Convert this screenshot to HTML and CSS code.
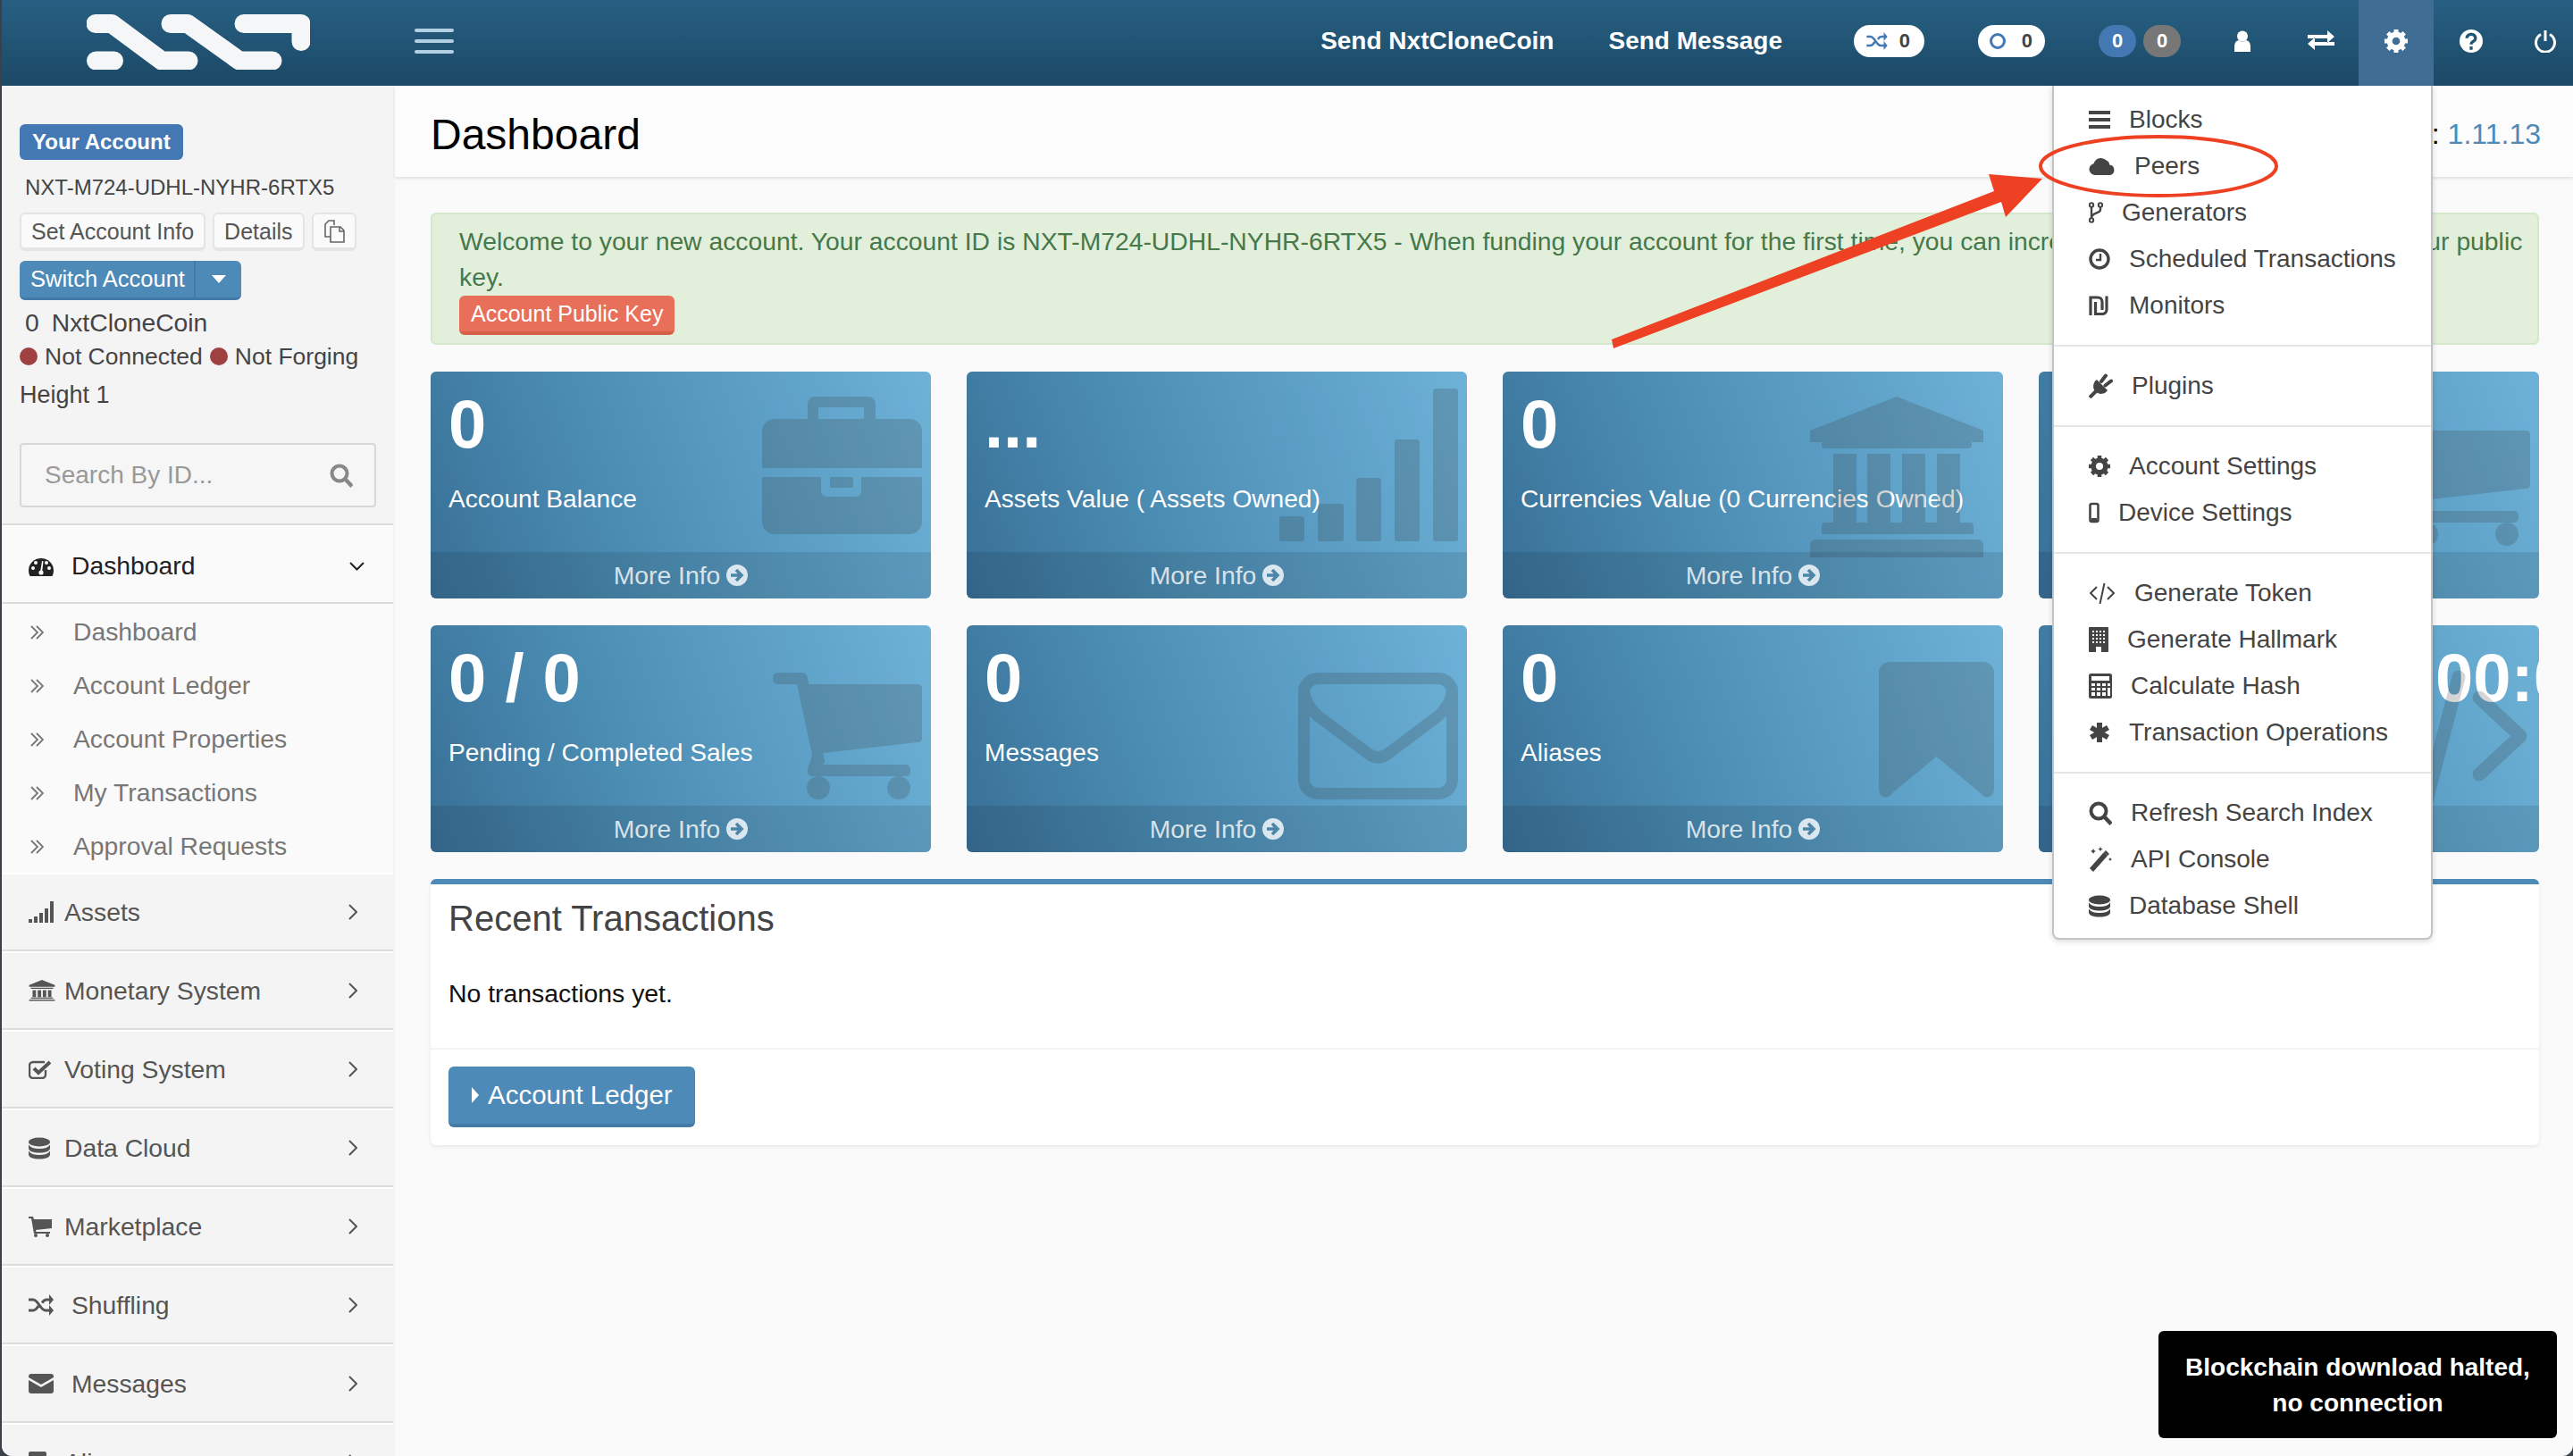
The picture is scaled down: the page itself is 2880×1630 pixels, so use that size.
FILE: index.html
```html
<!DOCTYPE html>
<html lang="en">
<head>
  <meta charset="UTF-8" />
  <title>Dashboard | NxtCloneCoin</title>
  <link rel="stylesheet" href="styles.css">
</head>
<body>

<svg class="sprite" width="0" height="0">
  <defs>
    <g id="i-bars"><rect x="0" y="2" width="24" height="4"/><rect x="0" y="10" width="24" height="4"/><rect x="0" y="18" width="24" height="4"/></g>
    <path id="i-cloud" d="M7 22a6.5 6.5 0 0 1-1.6-12.8A8.5 8.5 0 0 1 19.6 5.6a5.6 5.6 0 0 1 3.6 5A5.8 5.8 0 0 1 24 22z"/>
    <g id="i-fork" fill="none" stroke="currentColor" stroke-width="2"><circle cx="3" cy="3.5" r="2.2"/><circle cx="3" cy="20.5" r="2.2"/><circle cx="13" cy="3.5" r="2.2"/><path d="M3 6v12M13 6v3c0 4-10 3-10 9" stroke-width="2.4"/></g>
    <g id="i-clock" fill="none" stroke="currentColor"><circle cx="12" cy="12" r="10" stroke-width="3.4"/><path d="M13 6v7H8" stroke-width="2.4"/></g>
    <g id="i-ils" fill="none" stroke="currentColor" stroke-width="3.2"><path d="M2 23V3h8a5 5 0 0 1 5 5v9"/><path d="M20 1.500v15a5 5 0 0 1-5 5H7.500V8"/></g>
    <g id="i-plug"><path d="M9 7l12 12a9 9 0 0 1-13.500 1.500A9 9 0 0 1 9 7z"/><path d="M8 20l-7 7" stroke="currentColor" stroke-width="4" fill="none"/><path d="M14 9l5-6.500M18.500 13.500l6.500-5" stroke="currentColor" stroke-width="4" fill="none" stroke-linecap="round"/></g>
    <g id="i-cog" fill="none" stroke="currentColor"><circle cx="12" cy="12" r="6.800" stroke-width="5.600"/><path d="M12 0v5M12 19v5M0 12h5M19 12h5M3.500 3.500l3.500 3.500M20.500 3.500L17 7M3.500 20.500L7 17M20.500 20.500L17 17" stroke-width="4.600"/></g>
    <g id="i-mobile" fill="none" stroke="currentColor"><rect x="1.500" y="2" width="9" height="20" rx="2" stroke-width="2.600"/><path d="M3 19.500h6" stroke-width="3"/></g>
    <path id="i-code" d="M9 5L2 12l7 7M21 5l7 7-7 7M17.500 1l-5 23" fill="none" stroke="currentColor" stroke-width="2"/>
    <g id="i-building"><rect width="22" height="28" rx="1"/><path d="M4 4h2v2H4zM8 4h2v2H8zM12 4h2v2h-2zM16 4h2v2h-2zM4 8h2v2H4zM8 8h2v2H8zM12 8h2v2h-2zM16 8h2v2h-2zM4 12h2v2H4zM8 12h2v2H8zM12 12h2v2h-2zM16 12h2v2h-2zM4 16h2v2H4zM8 16h2v2H8zM12 16h2v2h-2zM16 16h2v2h-2zM8 22h6v6H8z" fill="#fff"/></g>
    <g id="i-calc"><rect width="26" height="28" rx="2.500"/><path d="M3 3h20v5H3zM3 11h4v3H3zM9 11h4v3H9zM15 11h4v3h-4zM21 11h3v3h-3zM3 16h4v3H3zM9 16h4v3H9zM15 16h4v3h-4zM21 16h3v9h-3zM3 21h4v4H3zM9 21h4v4H9zM15 21h4v4h-4z" fill="#fff"/></g>
    <path id="i-asterisk" d="M12 1v22M2.500 6.500l19 11M21.500 6.500l-19 11" stroke="currentColor" stroke-width="6" fill="none"/>
    <g id="i-search" fill="none" stroke="currentColor"><circle cx="11" cy="11" r="8.500" stroke-width="4"/><path d="M17 17l8 8.500" stroke-width="4.400"/></g>
    <g id="i-magic"><path d="M1 25l16-18 4 4L5 29z"/><path d="M5 3l1 2 2 1-2 1-1 2-1-2-2-1 2-1zM13 1l.8 1.800 1.800.8-1.800.8-.8 1.800-.8-1.800-1.800-.8 1.800-.8zM24 13l.7 1.300 1.300.7-1.300.7-.7 1.300-.7-1.300-1.300-.7 1.300-.7z"/><path d="M17 7l2-2 4 4-2 2z"/></g>
    <g id="i-db"><ellipse cx="12" cy="5" rx="12" ry="5"/><path d="M0 8v4c0 3 5 5 12 5s12-2 12-5V8c-2 3-6 4.500-12 4.500S2 11 0 8zM0 15v4c0 3 5 5 12 5s12-2 12-5v-4c-2 3-6 4.500-12 4.500S2 18 0 15z"/></g>
    <path id="i-gauge" d="M0 16a14 14 0 0 1 28 0q0 3-1.500 6h-25Q0 19 0 16z"/>
    <g id="i-signal"><rect x="0" y="20" width="4" height="4"/><rect x="6" y="17" width="4" height="7"/><rect x="12" y="13" width="4" height="11"/><rect x="18" y="8" width="4" height="16"/><rect x="24" y="0" width="4" height="24"/></g>
    <g id="i-bank"><path d="M15 0l15 6v2H0V6z"/><path d="M2 9h26v1.500H2zM4 12h4v8H4zM10 12h4v8h-4zM16 12h4v8h-4zM22 12h4v8h-4zM2 20.500h26V22H2zM0 23h30v1.500H0z"/></g>
    <g id="i-check" fill="none" stroke="currentColor"><path d="M19 12v5a4 4 0 0 1-4 4H5a4 4 0 0 1-4-4V7a4 4 0 0 1 4-4h13" stroke-width="2.400"/><path d="M6 10l5 5L24 3" stroke-width="4"/></g>
    <g id="i-cart"><path d="M0 0h5l1 3h20v10L8 15l.500 2H24v2H6L3 2H0z"/><circle cx="8" cy="21" r="2"/><circle cx="21" cy="21" r="2"/></g>
    <g id="i-random"><path d="M0 6h5c6 0 8 12 14 12h5M0 18h5c3 0 4.500-2.500 6-5M15 9.500C16.500 7.500 18 6 20 6h4" fill="none" stroke="currentColor" stroke-width="3"/><path d="M23 0l5 6-5 6zM23 12l5 6-5 6z"/></g>
    <g id="i-mail"><path d="M3 0h22a3 3 0 0 1 3 3v1L14 12 0 4V3a3 3 0 0 1 3-3z"/><path d="M0 7v12a3 3 0 0 0 3 3h22a3 3 0 0 0 3-3V7L14 15z"/></g>
    <path id="i-bookmark" d="M2 0h16a2 2 0 0 1 2 2v22l-10-7-10 7V2a2 2 0 0 1 2-2z"/>
    <path id="i-right" d="M1 1l8 8-8 8" fill="none" stroke="currentColor" stroke-width="2"/>
    <path id="i-down" d="M1 1l7.500 7.500L16 1" fill="none" stroke="currentColor" stroke-width="2"/>
    <path id="i-double" d="M1 1l7 7-7 7M7 1l7 7-7 7" fill="none" stroke="currentColor" stroke-width="1.800"/>
    <g id="i-more"><circle cx="12" cy="12" r="12" fill="currentColor"/><path d="M5 12h11M11 6l6 6-6 6" fill="none" stroke="#4c85a9" stroke-width="3.600"/></g>
    <g id="g-cart"><path d="M6 0h26q6 0 7 6l1 7h122q5 0 5 5v55q0 5-5 5L56 90l2 8q1 2-2 5h93q5 0 5 7 0 6-5 6H45q-6 0-6-6 0-4 3-10l2-8L27 13H6q-6 0-6-6.500T6 0z"/><circle cx="51" cy="129" r="13"/><circle cx="141" cy="129" r="13"/></g>
  </defs>
</svg>

<div class="window">

  <header class="topbar">
    <div class="logo-wrap">
      <svg class="logo" width="250" height="62" viewBox="97 16 250 62">
        <path d="M107 26.500h18l56 41.500h30M191 26.500h19l58 41.500h37M273 26.500h64v20M107.500 68h20" fill="none" stroke="#f4f6f8" stroke-width="21" stroke-linecap="round" stroke-linejoin="round"/>
      </svg>
    </div>
    <div class="burger"><span></span><span></span><span></span></div>

    <nav class="topnav">
      <a class="toplink" href="#">Send NxtCloneCoin</a>
      <a class="toplink toplink-msg" href="#">Send Message</a>
      <span class="pill pill-a"><svg width="24" height="20" viewBox="0 0 28 24"><use href="#i-random"/></svg>0</span>
      <span class="pill pill-b"><svg width="20" height="20" viewBox="0 0 20 20"><circle cx="10" cy="10" r="7.500" fill="none" stroke="currentColor" stroke-width="3"/></svg>0</span>
      <span class="count count-blue">0</span>
      <span class="count count-grey">0</span>
      <a class="cell cell-first" href="#"><svg width="24" height="24" viewBox="0 0 24 24"><circle cx="12" cy="6.500" r="6"/><path d="M3 24v-6q0-6 5-7 4 3 8 0 5 1 5 7v6z"/></svg></a>
      <a class="cell" href="#"><svg width="30" height="24" viewBox="0 0 30 24"><path d="M0 6h22V1l8 7-8 7v-5H0zM30 14H8V9l-8 7 8 7v-5h22z" transform="translate(0 -1)"/></svg></a>
      <div class="cell cell-open">
        <svg width="26" height="26" viewBox="0 0 24 24"><use href="#i-cog"/></svg>
        <div class="dropdown">
          <a class="menu-item" href="#"><svg width="24" height="24" viewBox="0 0 24 24"><use href="#i-bars"/></svg>Blocks</a>
          <a class="menu-item" href="#"><svg width="30" height="24" viewBox="0 0 30 24"><use href="#i-cloud"/></svg>Peers</a>
          <a class="menu-item" href="#"><svg width="16" height="24" viewBox="0 0 16 24"><use href="#i-fork"/></svg>Generators</a>
          <a class="menu-item" href="#"><svg width="24" height="24" viewBox="0 0 24 24"><use href="#i-clock"/></svg>Scheduled Transactions</a>
          <a class="menu-item" href="#"><svg width="22" height="24" viewBox="0 0 22 24"><use href="#i-ils"/></svg><span class="shift-2">Monitors</span></a>
          <div class="menu-line"></div>
          <a class="menu-item" href="#"><svg width="27" height="28" viewBox="0 0 27 28"><use href="#i-plug"/></svg>Plugins</a>
          <div class="menu-line"></div>
          <a class="menu-item" href="#"><svg width="24" height="24" viewBox="0 0 24 24"><use href="#i-cog"/></svg>Account Settings</a>
          <a class="menu-item" href="#"><svg width="12" height="24" viewBox="0 0 12 24"><use href="#i-mobile"/></svg>Device Settings</a>
          <div class="menu-line"></div>
          <a class="menu-item" href="#"><svg width="30" height="24" viewBox="0 0 30 24"><use href="#i-code"/></svg>Generate Token</a>
          <a class="menu-item" href="#"><svg width="22" height="28" viewBox="0 0 22 28"><use href="#i-building"/></svg>Generate Hallmark</a>
          <a class="menu-item" href="#"><svg width="26" height="28" viewBox="0 0 26 28"><use href="#i-calc"/></svg>Calculate Hash</a>
          <a class="menu-item" href="#"><svg width="24" height="24" viewBox="0 0 24 24"><use href="#i-asterisk"/></svg>Transaction Operations</a>
          <div class="menu-line"></div>
          <a class="menu-item" href="#"><svg width="26" height="27" viewBox="0 0 26 27"><use href="#i-search"/></svg>Refresh Search Index</a>
          <a class="menu-item" href="#"><svg width="26" height="30" viewBox="0 0 26 30"><use href="#i-magic"/></svg>API Console</a>
          <a class="menu-item" href="#"><svg width="24" height="27" viewBox="0 0 24 24"><use href="#i-db"/></svg>Database Shell</a>
        </div>
      </div>
      <a class="cell" href="#"><svg width="26" height="26" viewBox="0 0 24 24"><circle cx="12" cy="12" r="12"/><path d="M7.500 9a4.500 4 0 1 1 6.500 3.500c-1.500.8-2 1.500-2 3M12 17.500v3.500" fill="none" stroke="#205470" stroke-width="3"/></svg></a>
      <a class="cell cell-last" href="#"><svg width="24" height="26" viewBox="0 0 24 26"><path d="M7 5.500a10.500 10.500 0 1 0 10 0M12 1v12" fill="none" stroke="currentColor" stroke-width="3"/></svg></a>
    </nav>
  </header>

  <div class="layout">
    <aside class="sidebar">
      <div class="user-box">
        <span class="account-badge">Your Account</span>
        <div class="account-id">NXT-M724-UDHL-NYHR-6RTX5</div>
        <div class="btn-row">
          <a class="btn-plain" href="#">Set Account Info</a>
          <a class="btn-plain" href="#">Details</a>
          <a class="btn-plain btn-copy" href="#"><svg width="24" height="26" viewBox="0 0 24 26"><path d="M8 19H2V5l4-4h6v5M8 8h6l5 0 4 4v13H8zM18 8v5h5" fill="none" stroke="#666" stroke-width="1.600"/></svg></a>
        </div>
        <div class="switch">
          <a class="switch-main" href="#">Switch Account</a>
          <a class="switch-caret" href="#"><i></i></a>
        </div>
        <div class="balance"><span>0</span>NxtCloneCoin</div>
        <div class="status"><i class="dot"></i>Not Connected<i class="dot dot-second"></i>Not Forging</div>
        <div class="height">Height 1</div>
        <div class="search">
          <span>Search By ID...</span>
          <svg width="26" height="27" viewBox="0 0 26 27"><use href="#i-search"/></svg>
        </div>
      </div>

      <nav class="side-nav">
        <a class="side-row side-row-open" href="#">
          <span class="side-ico side-ico-wide"><svg width="28" height="22" viewBox="0 0 28 22"><use href="#i-gauge"/><g fill="#fafafa"><circle cx="5" cy="13" r="2"/><circle cx="8" cy="7" r="2"/><circle cx="20" cy="7" r="2"/><circle cx="23" cy="13" r="2"/><circle cx="14" cy="18" r="2.600"/><path d="M13 18l2-13 1.500.5L15 18z"/></g></svg></span>
          Dashboard
          <svg class="chev chev-down" width="17" height="10" viewBox="0 0 17 10"><use href="#i-down"/></svg>
        </a>
        <div class="side-sub">
          <a class="sub-row" href="#"><svg width="15" height="16" viewBox="0 0 15 16"><use href="#i-double"/></svg>Dashboard</a>
          <a class="sub-row" href="#"><svg width="15" height="16" viewBox="0 0 15 16"><use href="#i-double"/></svg>Account Ledger</a>
          <a class="sub-row" href="#"><svg width="15" height="16" viewBox="0 0 15 16"><use href="#i-double"/></svg>Account Properties</a>
          <a class="sub-row" href="#"><svg width="15" height="16" viewBox="0 0 15 16"><use href="#i-double"/></svg>My Transactions</a>
          <a class="sub-row" href="#"><svg width="15" height="16" viewBox="0 0 15 16"><use href="#i-double"/></svg>Approval Requests</a>
        </div>
        <a class="side-row" href="#"><span class="side-ico"><svg width="28" height="24" viewBox="0 0 28 24"><use href="#i-signal"/></svg></span>Assets<svg class="chev" width="10" height="18" viewBox="0 0 10 18"><use href="#i-right"/></svg></a>
        <a class="side-row" href="#"><span class="side-ico"><svg width="30" height="24" viewBox="0 0 30 25"><use href="#i-bank"/></svg></span>Monetary System<svg class="chev" width="10" height="18" viewBox="0 0 10 18"><use href="#i-right"/></svg></a>
        <a class="side-row" href="#"><span class="side-ico"><svg width="26" height="22" viewBox="0 0 26 22"><use href="#i-check"/></svg></span>Voting System<svg class="chev" width="10" height="18" viewBox="0 0 10 18"><use href="#i-right"/></svg></a>
        <a class="side-row" href="#"><span class="side-ico"><svg width="24" height="27" viewBox="0 0 24 24"><use href="#i-db"/></svg></span>Data Cloud<svg class="chev" width="10" height="18" viewBox="0 0 10 18"><use href="#i-right"/></svg></a>
        <a class="side-row" href="#"><span class="side-ico"><svg width="26" height="23" viewBox="0 0 26 23"><use href="#i-cart"/></svg></span>Marketplace<svg class="chev" width="10" height="18" viewBox="0 0 10 18"><use href="#i-right"/></svg></a>
        <a class="side-row" href="#"><span class="side-ico side-ico-wide"><svg width="28" height="24" viewBox="0 0 28 24"><use href="#i-random"/></svg></span>Shuffling<svg class="chev" width="10" height="18" viewBox="0 0 10 18"><use href="#i-right"/></svg></a>
        <a class="side-row" href="#"><span class="side-ico side-ico-wide"><svg width="28" height="22" viewBox="0 0 28 22"><use href="#i-mail"/></svg></span>Messages<svg class="chev" width="10" height="18" viewBox="0 0 10 18"><use href="#i-right"/></svg></a>
        <a class="side-row" href="#"><span class="side-ico"><svg width="20" height="24" viewBox="0 0 20 24"><use href="#i-bookmark"/></svg></span>Aliases<svg class="chev" width="10" height="18" viewBox="0 0 10 18"><use href="#i-right"/></svg></a>
      </nav>
    </aside>

    <main class="main">
      <div class="title-bar">
        <h1>Dashboard</h1>
        <div class="version">Version: <a href="#">1.11.13</a></div>
      </div>

      <div class="content">
        <div class="alert">
          <div>Welcome to your new account. Your account ID is NXT-M724-UDHL-NYHR-6RTX5 - When funding your account for the first time, you can increase the security by specifying your public key.</div>
          <a class="btn-red" href="#">Account Public Key</a>
        </div>

        <div class="cards">
          <div class="card">
            <div class="card-body">
              <div class="card-num">0</div>
              <div class="card-label">Account Balance</div>
            </div>
            <a class="card-more" href="#">More Info<svg width="24" height="24" viewBox="0 0 24 24"><use href="#i-more"/></svg></a>
            <svg class="ghost ghost-brief" width="179" height="154" viewBox="0 0 179 154"><path fill-rule="evenodd" d="M14 25h37V8a8 8 0 0 1 8-8h60a8 8 0 0 1 8 8v17h38a14 14 0 0 1 14 14v41H0V39a14 14 0 0 1 14-14zM63 12v13h51V12zM0 90h66v16a6 6 0 0 0 6 6h33a6 6 0 0 0 6-6V90h68v50a14 14 0 0 1-14 14H14a14 14 0 0 1-14-14zM76 90h26v12H76z"/></svg>
          </div>

          <div class="card">
            <div class="card-body">
              <div class="card-num">...</div>
              <div class="card-label">Assets Value ( Assets Owned)</div>
            </div>
            <a class="card-more" href="#">More Info<svg width="24" height="24" viewBox="0 0 24 24"><use href="#i-more"/></svg></a>
            <svg class="ghost ghost-bars" width="200" height="171" viewBox="0 0 200 171"><rect x="0" y="143" width="28" height="28" rx="3"/><rect x="43" y="129" width="29" height="42" rx="3"/><rect x="86" y="100" width="28" height="71" rx="3"/><rect x="129" y="57" width="28" height="114" rx="3"/><rect x="172" y="0" width="28" height="171" rx="3"/></svg>
          </div>

          <div class="card">
            <div class="card-body">
              <div class="card-num">0</div>
              <div class="card-label">Currencies Value (0 Currencies Owned)</div>
            </div>
            <a class="card-more" href="#">More Info<svg width="24" height="24" viewBox="0 0 24 24"><use href="#i-more"/></svg></a>
            <svg class="ghost ghost-bank" width="194" height="180" viewBox="0 0 194 180"><path d="M97 0l97 38v13H181v3a4 4 0 0 1-4 4H17a4 4 0 0 1-4-4v-3H0V38zM26 64h26v77H26zM64 64h26v77H64zM103 64h26v77h-26zM142 64h26v77h-26zM17 141h162a4 4 0 0 1 4 4v9H13v-9a4 4 0 0 1 4-4zM6 160h182a6 6 0 0 1 6 6v14H0v-14a6 6 0 0 1 6-6z"/></svg>
          </div>

          <div class="card">
            <div class="card-body"></div>
            <a class="card-more" href="#">More Info<svg width="24" height="24" viewBox="0 0 24 24"><use href="#i-more"/></svg></a>
            <svg class="ghost ghost-cart" width="167" height="142" viewBox="0 0 167 142"><use href="#g-cart"/></svg>
          </div>

          <div class="card">
            <div class="card-body">
              <div class="card-num">0 / 0</div>
              <div class="card-label">Pending / Completed Sales</div>
            </div>
            <a class="card-more" href="#">More Info<svg width="24" height="24" viewBox="0 0 24 24"><use href="#i-more"/></svg></a>
            <svg class="ghost ghost-cart" width="167" height="142" viewBox="0 0 167 142"><use href="#g-cart"/></svg>
          </div>

          <div class="card">
            <div class="card-body">
              <div class="card-num">0</div>
              <div class="card-label">Messages</div>
            </div>
            <a class="card-more" href="#">More Info<svg width="24" height="24" viewBox="0 0 24 24"><use href="#i-more"/></svg></a>
            <svg class="ghost ghost-mail" width="179" height="142" viewBox="0 0 179 142"><path d="M22 6.500h135a15.500 15.500 0 0 1 15.500 15.500v98a15.500 15.500 0 0 1-15.500 15.500H22A15.500 15.500 0 0 1 6.500 120V22A15.500 15.500 0 0 1 22 6.500zM6.500 16c0 14 5 22 15 32l56 42q12 10 24 0l56-42c10-10 15-18 15-32" fill="none" stroke="#333" stroke-width="13"/></svg>
          </div>

          <div class="card">
            <div class="card-body">
              <div class="card-num">0</div>
              <div class="card-label">Aliases</div>
            </div>
            <a class="card-more" href="#">More Info<svg width="24" height="24" viewBox="0 0 24 24"><use href="#i-more"/></svg></a>
            <svg class="ghost ghost-mark" width="129" height="152" viewBox="0 0 129 152"><path d="M12 0h105a12 12 0 0 1 12 12v130c0 10-10 13-15 5L64.500 106 15 147c-5 8-15 5-15-5V12A12 12 0 0 1 12 0z"/></svg>
          </div>

          <div class="card">
            <div class="card-body">
              <div class="card-num card-num-clip">00:00:00</div>
            </div>
            <a class="card-more" href="#">More Info<svg width="24" height="24" viewBox="0 0 24 24"><use href="#i-more"/></svg></a>
            <svg class="ghost ghost-code" width="220" height="155" viewBox="0 0 220 155"><path d="M57 31L11 74l46 43M163 31l46 43-46 43M140 8l-37 142" fill="none" stroke="#333" stroke-width="15" stroke-linejoin="round" stroke-linecap="round"/></svg>
          </div>
        </div>

        <section class="panel">
          <h3>Recent Transactions</h3>
          <p>No transactions yet.</p>
          <div class="panel-foot">
            <a class="btn-blue" href="#"><i></i>Account Ledger</a>
          </div>
        </section>
      </div>
    </main>
  </div>

  <!-- red markup drawn over the screenshot -->
  <svg class="markup" width="2880" height="1630" viewBox="0 0 2880 1630">
    <ellipse cx="2416" cy="186" rx="132" ry="33" fill="none" stroke="#ee4023" stroke-width="4"/>
    <path d="M1804 380L2232 214L2226 195L2286 200L2245 243L2240 226L1806 390Z" fill="#ee4023"/>
  </svg>

  <div class="toast">Blockchain download halted,<br>no connection</div>
</div>

</body>
</html>
```

FILE: styles.css
```css
* {
  box-sizing: border-box;
}

html, body {
  margin: 0;
  height: 100%;
  overflow: hidden;
  background: #3c4048;
}

body {
  font-family: 'Liberation Sans', Arial, sans-serif;
  font-size: 28px;
  color: #444;
}

a {
  color: inherit;
  text-decoration: none;
}

svg {
  fill: currentColor;
  flex: none;
}

.sprite {
  position: absolute;
}

.window {
  position: relative;
  margin-left: 2px;
  height: 1630px;
  overflow: hidden;
  background: #fafafa;
  border-radius: 0 0 12px 12px;
  display: flex;
  flex-direction: column;
}

/* top bar */
.topbar {
  position: relative;
  z-index: 10;
  height: 96px;
  flex: none;
  display: flex;
  align-items: center;
  background: linear-gradient(#275f82, #1c4966);
  color: #fff;
}

.logo-wrap {
  width: 440px;
  padding: 0 0 2px 95px;
  display: flex;
}

.burger {
  margin: 0 0 4px 22px;
  width: 44px;
}

.burger span {
  display: block;
  height: 4px;
  margin-bottom: 8px;
  border-radius: 2px;
  background: #b3cfe4;
}

.burger span:last-child {
  margin-bottom: 0;
}

.topnav {
  margin-left: auto;
  height: 96px;
  display: flex;
  align-items: center;
}

.toplink {
  margin-bottom: 4px;
  font-weight: bold;
  font-size: 28px;
}

.toplink-msg {
  margin-left: 61px;
}

.pill {
  height: 36px;
  margin-bottom: 4px;
  border-radius: 18px;
  background: #fff;
  color: #444;
  font-size: 22px;
  font-weight: bold;
  display: flex;
  align-items: center;
  justify-content: space-between;
}

.pill svg {
  color: #4478b3;
}

.pill-a {
  width: 79px;
  margin-left: 80px;
  padding: 0 16px 0 14px;
}

.pill-b {
  width: 75px;
  margin-left: 60px;
  padding: 0 14px 0 12px;
}

.count {
  width: 42px;
  height: 36px;
  margin-bottom: 4px;
  border-radius: 18px;
  font-size: 22px;
  font-weight: bold;
  display: flex;
  align-items: center;
  justify-content: center;
}

.count-blue {
  margin-left: 60px;
  background: #4478b3;
}

.count-grey {
  margin-left: 8px;
  background: #777;
}

.cell {
  position: relative;
  width: 84px;
  height: 96px;
  padding-bottom: 4px;
  display: flex;
  align-items: center;
  justify-content: center;
}

.cell-first {
  margin-left: 31px;
  padding-right: 8px;
}

.cell-open {
  background: #3f6d93;
}

.cell-last {
  width: 72px;
  justify-content: flex-start;
  padding-left: 29px;
}

/* settings menu */
.dropdown {
  position: absolute;
  top: 100%;
  right: 1px;
  width: 426px;
  padding: 12px 0 10px;
  background: #fff;
  color: #444;
  font-size: 28px;
  border: solid #c4c4c4;
  border-width: 0 2px 2px;
  border-radius: 0 0 8px 8px;
  box-shadow: 0 2px 6px rgba(0, 0, 0, 0.15);
}

.menu-item {
  height: 52px;
  padding-left: 39px;
  display: flex;
  align-items: center;
  gap: 21px;
  white-space: nowrap;
}

.shift-2 {
  margin-left: 2px;
}

.menu-line {
  height: 2px;
  margin: 18px 0;
  background: #e6e6e6;
}

/* sidebar */
.layout {
  flex: 1;
  display: flex;
  min-height: 0;
}

.sidebar {
  width: 440px;
  flex: none;
  background: #f4f4f4;
  padding-right: 2px;
}

.user-box {
  height: 492px;
  padding: 43px 19px 0 20px;
  border-bottom: 2px solid #dcdcdc;
}

.account-badge {
  display: inline-block;
  height: 40px;
  line-height: 40px;
  padding: 0 14px;
  background: #4478b3;
  color: #fff;
  font-size: 24px;
  font-weight: bold;
  border-radius: 6px;
}

.account-id {
  margin: 16px 0 0 6px;
  height: 30px;
  line-height: 30px;
  font-size: 24px;
}

.btn-row {
  margin-top: 13px;
  display: flex;
  gap: 8px;
}

.btn-plain {
  height: 43px;
  line-height: 39px;
  padding: 0 11px;
  font-size: 25px;
  color: #555;
  background: #fafafa;
  border: 2px solid #e4e4e4;
  border-bottom-width: 4px;
  border-radius: 6px;
}

.btn-copy {
  display: flex;
  align-items: center;
}

.switch {
  margin-top: 11px;
  width: 248px;
  height: 44px;
  display: flex;
  color: #fff;
  background: #4e8ab8;
  border-bottom: 3px solid #427ba7;
  border-radius: 6px;
  font-size: 25.500px;
  line-height: 41px;
}

.switch-main {
  width: 197px;
  padding-left: 12px;
  white-space: nowrap;
  border-right: 2px solid #427ba7;
}

.switch-caret {
  flex: 1;
  display: flex;
  align-items: center;
  justify-content: center;
}

.switch-caret i {
  border-top: 9px solid #fff;
  border-left: 8px solid transparent;
  border-right: 8px solid transparent;
}

.balance {
  margin: 7px 0 0 6px;
  height: 36px;
  line-height: 36px;
  font-size: 28.300px;
}

.balance span {
  margin-right: 14px;
}

.status {
  margin-top: 4px;
  height: 32px;
  display: flex;
  align-items: center;
  font-size: 26.500px;
  white-space: nowrap;
}

.dot {
  width: 20px;
  height: 20px;
  margin-right: 8px;
  border-radius: 50%;
  background: #a04141;
}

.dot-second {
  margin-left: 8px;
}

.height {
  margin-top: 11px;
  height: 32px;
  line-height: 32px;
  font-size: 27px;
}

.search {
  margin-top: 38px;
  height: 72px;
  padding: 0 24px 0 26px;
  display: flex;
  align-items: center;
  justify-content: space-between;
  color: #999;
  background: #f6f6f6;
  border: 2px solid #d8d8d8;
  border-radius: 4px;
}

.search svg {
  color: #888;
}

.side-nav {
  font-size: 28.300px;
}

.side-row {
  position: relative;
  height: 88px;
  padding-left: 30px;
  display: flex;
  align-items: center;
  color: #555;
  border-top: 2px solid #fff;
  border-bottom: 2px solid #dcdcdc;
}

.side-row-open {
  padding-top: 3px;
  background: #fafafa;
  color: #222;
}

.side-ico {
  width: 40px;
  display: flex;
}

.side-ico-wide {
  width: 48px;
}

.chev {
  position: absolute;
  right: 40px;
}

.chev-down {
  right: 32px;
}

.side-sub {
  height: 301px;
  background: #fafafa;
  color: #777;
}

.sub-row {
  height: 60px;
  padding: 3px 0 0 32px;
  display: flex;
  align-items: center;
  gap: 33px;
}

/* main column */
.main {
  flex: 1;
  min-width: 0;
}

.title-bar {
  height: 102px;
  padding: 6px 36px 0 40px;
  display: flex;
  align-items: center;
  justify-content: space-between;
  background: #fcfcfc;
  box-shadow: 0 2px 3px rgba(0, 0, 0, 0.1);
}

.title-bar h1 {
  margin: 0;
  font-size: 48px;
  font-weight: normal;
  color: #000;
}

.version {
  font-size: 32px;
  color: #000;
}

.version a {
  color: #4e8ab8;
}

.content {
  padding: 40px 38px 0 40px;
}

.alert {
  height: 148px;
  padding: 10px 12px 0 30px;
  background: #e2efda;
  border: 2px solid #d6e8cc;
  border-radius: 6px;
  color: #47784a;
  font-size: 28.300px;
  line-height: 40px;
}

.btn-red {
  display: inline-block;
  height: 44px;
  line-height: 40px;
  padding: 0 13px;
  color: #fff;
  font-size: 25px;
  background: #e8705a;
  border-bottom: 4px solid #d65f49;
  border-radius: 6px;
}

.cards {
  margin-top: 30px;
  display: grid;
  grid-template-columns: repeat(4, 1fr);
  gap: 30px 40px;
}

.card {
  position: relative;
  height: 254px;
  display: flex;
  flex-direction: column;
  overflow: hidden;
  color: #fff;
  border-radius: 6px;
  background: linear-gradient(70deg, #397097 0%, #4a8bb2 35%, #6eb2d8 100%);
}

.card-body {
  flex: 1;
  padding: 21px 20px 0;
}

.card-num {
  font-size: 76px;
  font-weight: bold;
  line-height: 1;
  white-space: nowrap;
}

.card-num-clip {
  padding-left: 424px;
}

.card-label {
  margin-top: 26px;
  height: 40px;
  line-height: 40px;
  font-size: 28.100px;
  white-space: nowrap;
}

.card-more {
  height: 52px;
  display: flex;
  align-items: center;
  justify-content: center;
  gap: 7px;
  font-size: 28.300px;
  color: rgba(255, 255, 255, 0.8);
  background: rgba(0, 0, 0, 0.1);
}

.ghost {
  position: absolute;
  color: #333;
  fill: #333;
  opacity: 0.2;
}

.ghost-brief {
  top: 28px;
  right: 10px;
}

.ghost-bars {
  top: 19px;
  right: 10px;
}

.ghost-bank {
  top: 28px;
  right: 22px;
}

.ghost-cart {
  top: 53px;
  right: 10px;
}

.ghost-mail {
  top: 53px;
  right: 10px;
}

.ghost-mark {
  top: 41px;
  right: 10px;
}

.ghost-code {
  top: 50px;
  right: 10px;
}

.panel {
  margin-top: 30px;
  height: 298px;
  background: #fff;
  border-top: 6px solid #4e8ab8;
  border-radius: 6px;
  box-shadow: 0 2px 4px rgba(0, 0, 0, 0.08);
}

.panel h3 {
  margin: 0;
  padding: 16px 20px 0;
  height: 72px;
  line-height: 44px;
  font-size: 40px;
  font-weight: normal;
  color: #444;
}

.panel p {
  margin: 0;
  padding: 30px 20px 0;
  height: 111px;
  line-height: 40px;
  font-size: 28.400px;
  color: #111;
}

.panel-foot {
  padding: 19px 20px 0;
  border-top: 2px solid #f4f4f4;
}

.btn-blue {
  width: 276px;
  height: 68px;
  padding-left: 26px;
  display: flex;
  align-items: center;
  gap: 10px;
  color: #fff;
  font-size: 29.500px;
  background: #4e8ab8;
  border-bottom: 4px solid #427ba7;
  border-radius: 6px;
}

.btn-blue i {
  border-left: 8px solid #fff;
  border-top: 9px solid transparent;
  border-bottom: 9px solid transparent;
}

/* annotations and toast sit over everything */
.markup {
  position: absolute;
  top: 0;
  left: -2px;
  z-index: 15;
  pointer-events: none;
}

.toast {
  position: absolute;
  right: 18px;
  bottom: 20px;
  z-index: 20;
  width: 446px;
  height: 120px;
  padding-top: 21px;
  text-align: center;
  line-height: 40px;
  font-weight: bold;
  color: #fff;
  background: #000;
  border-radius: 6px;
}
```
